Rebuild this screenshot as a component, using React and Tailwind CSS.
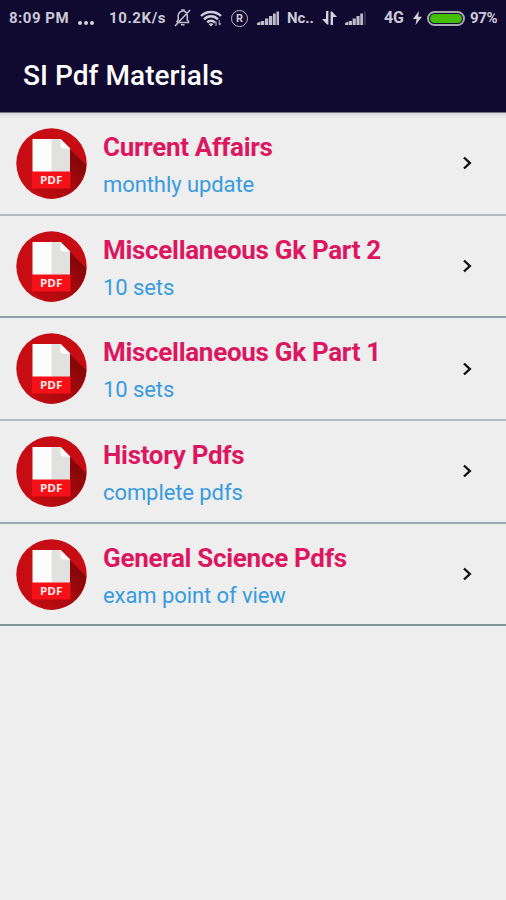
const items = [
  { title: "Current Affairs", sub: "monthly update", line: "bg-[#afbdc3]" },
  { title: "Miscellaneous Gk Part 2", sub: "10 sets", line: "bg-[#8d9fa5]" },
  { title: "Miscellaneous Gk Part 1", sub: "10 sets", line: "bg-[#afbdc3]" },
  { title: "History Pdfs", sub: "complete pdfs", line: "bg-[#9aabb1]" },
  { title: "General Science Pdfs", sub: "exam point of view", line: "bg-[#83979a]" },
];

function Signal({ className, dimLast }) {
  return (
    <svg className={className} viewBox="0 0 22 16" fill="#bebccb" preserveAspectRatio="none">
      <path d="M0 15v-2l3.5-1.5V15zM4 15v-4h3.3v4zM8 15V8.5h3.3V15zM12 15V6h3.3v9zM16 15V3.5h2.8V15z" />
      <path d="M19.5 15V1.5H22V15z" opacity={dimLast ? 0.2 : 1} />
    </svg>
  );
}

function StatusBar() {
  return (
    <div className="flex h-9 items-center whitespace-nowrap pl-[9px] text-[15px] font-bold text-[#cbc9d7]">
      <span className="w-[69px] shrink-0 tracking-[0.5px]">8:09 PM</span>
      <span className="flex w-[31px] shrink-0 gap-[2px] pt-[9px]">
        <i className="size-[4px] rounded-full bg-[#d4d2df]" />
        <i className="size-[4px] rounded-full bg-[#d4d2df]" />
        <i className="size-[4px] rounded-full bg-[#d4d2df]" />
      </span>
      <span className="w-[65px] shrink-0 tracking-[0.6px]">10.2K/s</span>
      <svg className="mr-[9px] h-[18px] w-[17px] shrink-0" viewBox="0 0 17 18" fill="none" stroke="#bdbbcb" strokeWidth="1.6">
        <path d="M2.5 13.5h12v-1l-1.2-1.5V7c0-2.6-1.6-4.3-3.3-4.7V1H8v1.3C5.4 3 4.2 5 4.2 7v4L2.5 13M7 15.8h3.5M1 17L16 1" />
      </svg>
      <svg className="mr-[9px] h-[17px] w-[22px] shrink-0" viewBox="0 0 22 17" fill="none" stroke="#cfcddb" strokeWidth="2.4">
        <path d="M1 6C6.5.6 15.5.6 21 6M4 9.3c4-4 10-4 14 0M7.2 12.4c2.2-2.2 5.4-2.2 7.6 0" />
        <path d="M8.5 14L11 16.5l2.5-2.5c-1.3-1.1-3.7-1.1-5 0z" fill="#cfcddb" stroke="none" />
        <path d="M16 16v-4.5m-1.7 1.7l1.7-1.7M19.3 10v5m1.7-1.8L19.3 15" strokeWidth="1.3" stroke="#9896ac" />
      </svg>
      <span className="mr-[9px] flex size-[17px] shrink-0 items-center justify-center rounded-full border-[1.5px] border-[#bdbbcb] text-[11px] font-bold leading-none">R</span>
      <Signal className="mr-2 h-4 w-[22px] shrink-0" />
      <span className="w-[35px] shrink-0 tracking-[-0.1px]">Nc..</span>
      <svg className="mr-[8px] h-[14px] w-[15px] shrink-0" viewBox="0 0 15 14" fill="#d4d2df">
        <path d="M4 0h2.4v13.5H5L0 8h4zM8.6 14V.5H10L15 6h-4v8z" />
      </svg>
      <Signal className="mr-[18px] h-4 w-[21px] shrink-0" dimLast />
      <span className="w-[29px] shrink-0 text-[16px] tracking-[-0.2px]">4G</span>
      <svg className="mr-[5px] h-[14px] w-[9px] shrink-0" viewBox="0 0 9 14" fill="#d4d2df">
        <path d="M6 0L0 8h3.6L2.5 14 9 5.8H5.2z" />
      </svg>
      <span className="mr-[5px] h-[15px] w-[38px] shrink-0 rounded-full border-2 border-[#aaa7b5] p-px">
        <span className="block h-full w-full rounded-full bg-[#43bf08]" />
      </span>
      <span className="tracking-[-0.4px]">97%</span>
    </div>
  );
}

function PdfIcon() {
  return (
    <svg className="size-[71px] shrink-0" viewBox="0 0 71 71">
      <defs>
        <linearGradient id="fold-shadow" gradientUnits="userSpaceOnUse" x1="62" y1="32" x2="40" y2="70">
          <stop offset="0" stopColor="#860709" />
          <stop offset="1" stopColor="#b90b10" />
        </linearGradient>
      </defs>
      <circle cx="35.5" cy="35.5" r="35.2" fill="#c70c13" />
      <path d="M53 20L70.4 37.4A35.2 35.2 0 0 1 28 69.9L17 60H53z" fill="url(#fold-shadow)" />
      <path d="M16.5 11h28L54 20.5V44H16.5z" fill="#fcfcfc" />
      <path d="M35.5 11h9L54 20.5V44H35.5z" fill="#e1e2df" />
      <path d="M44.5 11v6.5a3 3 0 0 0 3 3H54z" fill="#fff" />
      <path d="M16 43.5h38.5V60.5H16z" fill="#f51117" />
      <text x="24" y="55.5" fill="#ffe9e9" fontSize="10.5" fontWeight="700" fontFamily="Open Sans, sans-serif" textLength="22.5" lengthAdjust="spacingAndGlyphs">PDF</text>
    </svg>
  );
}

function Row({ item }) {
  return (
    <div className="flex h-[102.7px] flex-col">
      <div className="flex flex-1 items-center pl-[15.5px] pr-[34px]">
        <PdfIcon />
        <div className="ml-[16.5px] flex-1 whitespace-nowrap pt-[4px]">
          <div className="text-[26px] font-bold leading-[33px] tracking-[-0.3px] text-[#dc1760]">{item.title}</div>
          <div className="mt-[5px] text-[22px] leading-[31px] tracking-[-0.08px] text-[#389bdf]">{item.sub}</div>
        </div>
        <svg className="h-[14px] w-[9px] shrink-0" viewBox="0 0 9 14" fill="none" stroke="#111" strokeWidth="2.4">
          <path d="M1 1.5L6.8 7 1 12.5" />
        </svg>
      </div>
      <div className={"h-[2px] shrink-0 " + item.line} />
    </div>
  );
}

export default function App() {
  return (
    <div className="h-[900px] w-[506px] overflow-hidden bg-[#eeeeee] font-['Roboto',sans-serif]">
      <header className="h-[112px] bg-[#100930]">
        <StatusBar />
        <h1 className="pl-[23px] pt-[21px] text-[28px] font-medium leading-[38px] tracking-[0.05px] text-white">SI Pdf Materials</h1>
      </header>
      <div className="h-px bg-[#77747f]" />
      <main className="bg-[linear-gradient(to_bottom,#d9d9da,#eeeeee_6px)]">
        {items.map((item) => (
          <Row key={item.title} item={item} />
        ))}
      </main>
    </div>
  );
}
